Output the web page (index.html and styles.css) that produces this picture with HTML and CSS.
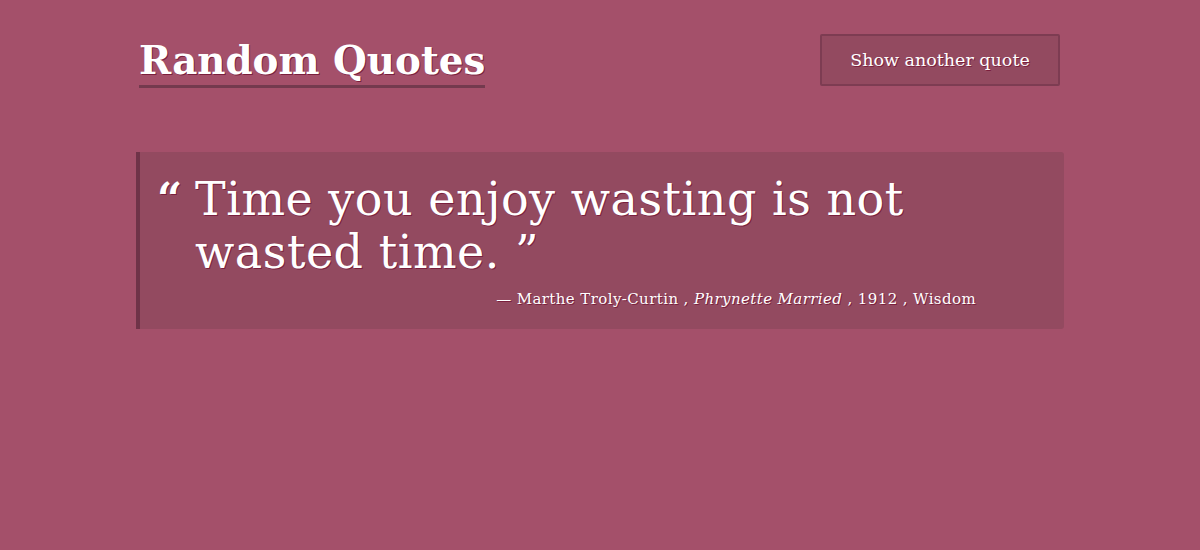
FILE: index.html
```html
<!DOCTYPE html>
<html lang="en">
<head>
<meta charset="utf-8">
<title>Random Quotes</title>
<link rel="stylesheet" href="styles.css">
</head>
<body>
<div class="page">
  <header class="header">
    <h1 class="title">Random Quotes</h1>
    <button class="btn" type="button">Show another quote</button>
  </header>
  <figure class="card">
    <span class="mark">“</span>
    <div class="body">
      <blockquote class="quote">Time you enjoy wasting is not wasted time. ”</blockquote>
      <figcaption class="cite">— Marthe Troly-Curtin , <em>Phrynette Married</em> , 1912 , Wisdom</figcaption>
    </div>
  </figure>
</div>
</body>
</html>
```
FILE: styles.css
```css
html, body {
  margin: 0;
  padding: 0;
  height: 100%;
}
body {
  background: #a4506a;
  color: #fff;
  font-family: "DejaVu Serif", "Liberation Serif", serif;
}
.page {
  width: 928px;
  margin: 0 auto;
  padding-top: 34px;
}
.header {
  display: flex;
  justify-content: space-between;
  align-items: flex-start;
  padding: 0 4px 0 3px;
}
.title {
  margin: 0;
  font-size: 38.8px;
  font-weight: bold;
  line-height: 48px;
  padding-top: 3px;
  border-bottom: 3px solid #733a4e;
  text-shadow: 1px 1px 0 #7a1f3d;
}
.btn {
  font-family: inherit;
  font-size: 17.5px;
  color: #fff;
  background: #934a60;
  border: 2px solid #7d3c52;
  border-radius: 2px;
  width: 240px;
  height: 52px;
  text-shadow: 1px 1px 0 #7a1f3d;
  cursor: pointer;
}
.card {
  margin: 64px 0 0 0;
  background: #934a60;
  border-left: 4px solid #6f3348;
  border-radius: 0 3px 3px 0;
  display: flex;
  padding: 21px 88px 0 17px;
  height: 177px;
  box-sizing: border-box;
}
.mark {
  font-weight: bold;
  font-size: 44px;
  line-height: 53px;
  width: 38px;
  flex: none;
  text-shadow: 1px 1px 0 #7a1f3d;
}
.body {
  flex: 1;
}
.quote {
  margin: 0;
  font-size: 46px;
  letter-spacing: 0.5px;
  line-height: 53px;
  text-shadow: 1px 1px 0 #7a1f3d;
}
.cite {
  margin-top: 11px;
  text-align: right;
  font-size: 15px;
  letter-spacing: 0.4px;
  text-shadow: 1px 1px 0 #7a1f3d;
}
```
